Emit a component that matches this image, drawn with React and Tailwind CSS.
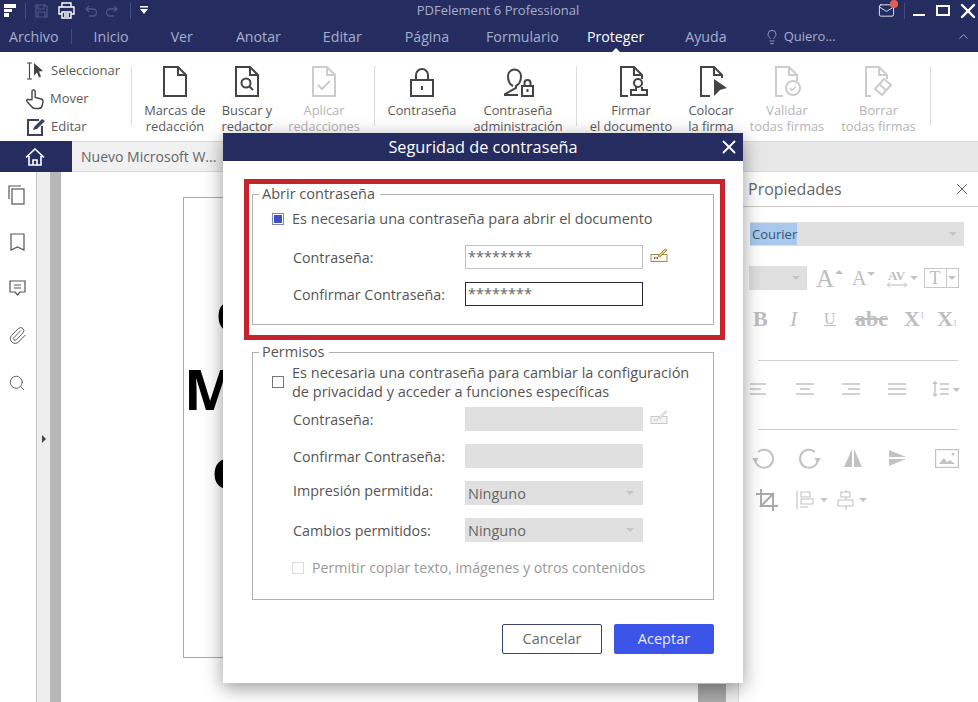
import { X, ChevronUp, Lightbulb, Search, Paperclip, Mail } from "lucide-react";

const navy = "bg-[#252d60]";

const menus = [
  ["Inicio", "ml-[21px]"],
  ["Ver", "ml-[42px]"],
  ["Anotar", "ml-[43px]"],
  ["Editar", "ml-[42px]"],
  ["Página", "ml-[43px]"],
  ["Formulario", "ml-[37px]"],
];

function DocIcon({ color = "#444", children, w = 24 }) {
  return (
    <svg width={w} height="31" viewBox={`0 0 ${w} 31`} fill="none" stroke={color} strokeWidth="2">
      {children || <path d="M1 1h14l8 8v21H1z" />}
      <path d="M15 1v8h8" />
    </svg>
  );
}

function RibbonItem({ icon, lines, width, off }) {
  return (
    <div className={`${width} shrink-0 pt-[14px] flex flex-col items-center`}>
      <div className="h-[33px] flex items-start justify-center">{icon}</div>
      <div className={`mt-[3px] text-[12.8px] leading-4 text-center whitespace-nowrap ${off ? "text-[#b4b4b4]" : "text-[#5a5a5a]"}`}>
        {lines[0]}
        {lines[1] && <br />}
        {lines[1]}
      </div>
    </div>
  );
}

function Sep({ className = "" }) {
  return <div className={`w-px h-[60px] mt-[14px] shrink-0 bg-[#dcdcdc] ${className}`} />;
}

function KeyIcon({ faded }) {
  return (
    <svg width="18" height="16" viewBox="0 0 18 16" fill="none">
      <rect x="1" y="7.5" width="16" height="7" fill={faded ? "#f4f4f4" : "#fdf8e8"} stroke={faded ? "#c8c8c8" : "#a09060"} />
      <path d="M4 11h5" stroke={faded ? "#c0c0c0" : "#444"} strokeWidth="1.5" strokeDasharray="1.5 1" />
      <path d="M8 9l7-7 2 1-7 7z" fill={faded ? "#e6e6e6" : "#e8c860"} stroke={faded ? "#c8c8c8" : "#8a7038"} strokeWidth="0.7" />
    </svg>
  );
}

function Row({ label, children, extra, labelClass = "pt-[1px]" }) {
  return (
    <div className="flex items-center h-6 pl-[40px]">
      <div className={`w-[172px] shrink-0 text-[14.3px] ${labelClass}`}>{label}</div>
      {children}
      {extra}
    </div>
  );
}

function Caret({ className = "" }) {
  return <div className={`w-0 h-0 border-x-[4px] border-x-transparent border-t-[4px] border-t-[#c4c4c4] ${className}`} />;
}

function Greybox({ text }) {
  return (
    <div className="w-[178px] h-6 bg-[#e0e0e0] flex items-center justify-between pl-[3px] pr-[9px] text-[#666]">
      <span className="pt-[1px]">{text}</span>
      {text && <Caret />}
    </div>
  );
}

function Dialog() {
  return (
    <div className="absolute left-[223px] top-[133px] w-[520px] h-[550px] bg-white shadow-[0_5px_18px_rgba(0,0,0,0.4)] text-[14.5px] leading-5 text-[#555] flex flex-col">
      <div className={`${navy} h-7 shrink-0 flex items-center justify-center relative`}>
        <span className="text-white text-[16.3px]">Seguridad de contraseña</span>
        <X className="absolute right-[3px] top-[3px] text-white" size={22} strokeWidth={2} />
      </div>

      <div className="ml-[21px] mr-[18px] mt-[18px] h-[161px] border-[5px] border-[#c6242d] pl-[3px] pr-[6px]">
        <fieldset className="h-[141px] border border-[#b0b0b0]">
          <legend className="ml-[6px] pl-[3px] pr-[5px]">Abrir contraseña</legend>
          <div className="flex items-center h-5 mt-[5px] pl-[19px]">
            <div className="w-3 h-3 border border-[#7c86b8] bg-[#3f51c5] shadow-[inset_0_0_0_1px_#fff] shrink-0" />
            <span className="ml-2">Es necesaria una contraseña para abrir el documento</span>
          </div>
          <div className="mt-[16px] flex flex-col gap-[13px]">
            <Row label="Contraseña:" extra={<div className="ml-[7px] -mt-[5px]"><KeyIcon /></div>}>
              <div className="w-[178px] h-6 border border-[#c0c0c0] pl-[2px] pt-[1px] leading-5 text-[#666]">********</div>
            </Row>
            <Row label="Confirmar Contraseña:">
              <div className="w-[178px] h-6 border border-[#2a2a3a] pl-[2px] pt-[1px] leading-5 text-[#666]">********</div>
            </Row>
          </div>
        </fieldset>
      </div>

      <fieldset className="mx-[29px] mt-[2px] h-[258px] border border-[#b0b0b0]">
        <legend className="ml-[6px] pl-[3px] pr-[5px]">Permisos</legend>
        <div className="flex items-center mt-[1px] pl-[19px] leading-[19px]">
          <div className="w-3 h-3 border border-[#777] shrink-0" />
          <span className="ml-2">
            Es necesaria una contraseña para cambiar la configuración
            <br />
            de privacidad y acceder a funciones específicas
          </span>
        </div>
        <div className="mt-[6px] flex flex-col gap-[13px]">
          <Row label="Contraseña:" extra={<div className="ml-[7px] -mt-[5px]"><KeyIcon faded /></div>}>
            <Greybox />
          </Row>
          <Row label="Confirmar Contraseña:">
            <Greybox />
          </Row>
          <Row label="Impresión permitida:" labelClass="pb-[4px]">
            <Greybox text="Ninguno" />
          </Row>
          <Row label="Cambios permitidos:">
            <Greybox text="Ninguno" />
          </Row>
        </div>
        <div className="flex items-center h-5 mt-[16px] pl-[39px] text-[14.2px] text-[#999]">
          <div className="w-3 h-3 border border-[#ddd] shrink-0" />
          <span className="ml-2">Permitir copiar texto, imágenes y otros contenidos</span>
        </div>
      </fieldset>

      <div className="flex justify-end gap-3 mr-[29px] mt-[24px]">
        <div className="w-[100px] h-[30px] border border-[#3a4270] rounded-[2px] flex items-center justify-center text-[#6a6a6a]">Cancelar</div>
        <div className="w-[100px] h-[30px] bg-[#3c55e8] rounded-[2px] flex items-center justify-center text-[#e8ecff]">Aceptar</div>
      </div>
    </div>
  );
}

function PropertiesPanel() {
  const grey = "#c2c2c2";
  return (
    <div className="w-[240px] shrink-0 bg-white border-l border-[#d8d8d8]">
      <div className="h-[35px] pl-[9px] pr-[7px] border-b border-[#c8c8c8] flex items-center justify-between">
        <span className="text-[16px] text-[#666]">Propiedades</span>
        <X size={18} strokeWidth={1.1} className="text-[#444]" />
      </div>
      <div className="ml-[11px] mt-[15px] w-[214px] h-6 bg-[#e0e0e0] flex items-center justify-between pr-[7px] text-[13px]">
        <span className="pl-[2px] bg-[#a9c8ee] text-[#3a5578] leading-[22px]">Courier</span>
        <Caret />
      </div>

      <div className="ml-[10px] mt-[20px] h-6 flex items-center font-['Liberation_Serif',serif] text-[#bdbdbd]">
        <div className="w-[58px] h-6 bg-[#e0e0e0] flex items-center justify-end pr-[7px]"><Caret /></div>
        <span className="ml-[9px] text-[25px] leading-none">A</span>
        <div className="w-0 h-0 mb-3 ml-[1px] border-x-[4px] border-x-transparent border-b-[4px] border-b-[#bdbdbd]" />
        <span className="ml-[9px] text-[20px] leading-none">A</span>
        <Caret className="mb-2" />
        <div className="ml-[11px] w-[22px] flex flex-col items-center">
          <span className="text-[13px] font-bold leading-[13px]">AV</span>
          <svg width="20" height="6" viewBox="0 0 20 6" fill="none" stroke="#bdbdbd">
            <path d="M0 3h20M3 .5L.5 3 3 5.500M17 .5L19.500 3 17 5.500" />
          </svg>
        </div>
        <Caret className="ml-[2px]" />
        <div className="ml-[6px] w-[35px] h-[20px] border border-[#c8c8c8] flex text-[18px] leading-[18px]">
          <span className="w-[22px] border-r border-[#c8c8c8] text-center">T</span>
          <span className="flex-1 flex items-center justify-center"><Caret /></span>
        </div>
      </div>

      <div className="ml-[14px] mt-[17px] h-6 flex items-center font-['Liberation_Serif',serif] text-[#bdbdbd] text-[22px] leading-none">
        <span className="font-bold w-[37px]">B</span>
        <span className="italic w-[34px]">I</span>
        <span className="underline text-[16px] w-[31px]">U</span>
        <span className="line-through w-[49px] font-bold">abc</span>
        <span className="font-bold">X</span>
        <span className="text-[9px] -mt-2 w-[17px]">1</span>
        <span className="font-bold">X</span>
        <span className="text-[9px] mt-2">1</span>
      </div>

      <div className="ml-[19px] mt-[29px] w-[200px] h-px bg-[#cfcfcf]" />

      <div className="ml-[11px] mt-[20px] h-[16px] flex items-center">
        {[
          "M0 2h16M0 7h11M0 12h16",
          "M0 2h18M4 7h10M0 12h18",
          "M0 2h18M6 7h12M0 12h18",
          "M0 2h18M0 7h18M0 12h18",
        ].map((d, i) => (
          <svg key={d} width="18" height="14" viewBox="0 0 18 14" className={i === 0 ? "" : "ml-[28px]"} stroke={grey} strokeWidth="1.6">
            <path d={d} />
          </svg>
        ))}
        <svg width="28" height="16" viewBox="0 0 28 16" className="ml-[26px]" stroke={grey} strokeWidth="1.4" fill="none">
          <path d="M3 1v14M1 3l2-2 2 2M1 13l2 2 2-2M8 3h9M8 8h9M8 13h9" />
          <path d="M21 7h7l-3.5 4z" fill={grey} stroke="none" />
        </svg>
      </div>

      <div className="ml-[19px] mt-[32px] w-[200px] h-px bg-[#cfcfcf]" />

      <div className="ml-[13px] mt-[16px] h-6 flex items-center">
        <svg width="24" height="24" viewBox="0 0 24 24" fill="none" stroke={grey} strokeWidth="2">
          <path d="M6 6a9 9 0 1 1-3 7" />
          <path d="M0 12h6.500l-3 5z" fill={grey} stroke="none" />
        </svg>
        <svg width="24" height="24" viewBox="0 0 24 24" fill="none" stroke={grey} strokeWidth="2" className="ml-[21px]">
          <path d="M18 6a9 9 0 1 0 3 7" />
          <path d="M24 12h-6.500l3 5z" fill={grey} stroke="none" />
        </svg>
        <svg width="18" height="18" viewBox="0 0 18 18" fill={grey} className="ml-[23px]">
          <path d="M8 0v18H0zM10 0l8 18h-8z" />
        </svg>
        <svg width="17" height="16" viewBox="0 0 17 16" fill={grey} className="ml-[27px]">
          <path d="M0 0l17 7H0zM0 9h17L0 16z" />
        </svg>
        <svg width="24" height="19" viewBox="0 0 24 19" fill="none" stroke={grey} strokeWidth="1.2" className="ml-[29px]">
          <rect x="0.6" y="0.6" width="22.8" height="17.8" />
          <path d="M4 15l5-6 3 4 3-2 5 4z" fill={grey} stroke="none" />
          <circle cx="18" cy="5" r="1.5" fill={grey} stroke="none" />
        </svg>
      </div>

      <div className="ml-[17px] mt-[18px] h-6 flex items-center">
        <svg width="22" height="22" viewBox="0 0 22 22" fill="none" stroke="#aaa" strokeWidth="2">
          <path d="M5 0v17h17M0 5h17v17M4 18L18 4" />
        </svg>
        <svg width="20" height="20" viewBox="0 0 20 20" fill="none" stroke={grey} strokeWidth="1.1" className="ml-[18px]">
          <path d="M1 1v18M5 2h9v5H5zM5 9h12v5H5zM4 17h8" />
        </svg>
        <Caret className="ml-[4px]" />
        <svg width="18" height="20" viewBox="0 0 18 20" fill="none" stroke={grey} strokeWidth="1.1" className="ml-[9px]">
          <path d="M4 2h9v5H4zM1 10h15v6H1zM9 0v2M9 7v3M9 16v4" />
        </svg>
        <Caret className="ml-[4px]" />
      </div>
    </div>
  );
}

export default function App() {
  return (
    <div className="relative w-[978px] h-[702px] overflow-hidden bg-white font-['Open_Sans',sans-serif]">
      <div className={`${navy} h-[26px] pb-[5px] flex items-center relative`}>
        <svg width="12" height="13" viewBox="0 0 12 13" fill="#fff" className="ml-[4px]">
          <path d="M0 0h12v4H0zM0 5h8v3H0zM0 9h5v4H0z" />
        </svg>
        <div className="ml-[9px] w-px h-4 bg-[#454e80]" />
        <svg width="13" height="14" viewBox="0 0 13 14" fill="none" stroke="#4d5688" strokeWidth="1.2" className="ml-[9px]">
          <path d="M1 1h9l2 2v10H1zM3 1v4h6V1M3 13V8h7v5" />
        </svg>
        <svg width="17" height="17" viewBox="0 0 17 17" fill="none" stroke="#fff" strokeWidth="1.4" className="ml-[10px]">
          <path d="M4 5V1h9v4M4 12H1V5h15v7h-3M4 10h9v6H4zM6 12h5M6 14h5" />
        </svg>
        <svg width="12" height="12" viewBox="0 0 12 12" fill="none" stroke="#4d5688" strokeWidth="1.3" className="ml-[10px]">
          <path d="M4 1L1 4l3 3M1 4h7a3 3 0 0 1 0 7H4" />
        </svg>
        <svg width="12" height="12" viewBox="0 0 12 12" fill="none" stroke="#4d5688" strokeWidth="1.3" className="ml-[9px]">
          <path d="M8 1l3 3-3 3M11 4H4a3 3 0 0 0 0 7h4" />
        </svg>
        <div className="ml-[12px] w-px h-4 bg-[#454e80]" />
        <svg width="8" height="9" viewBox="0 0 8 9" fill="#fff" className="ml-[9px]">
          <path d="M0 0h8v1.5H0zM0 3h8L4 8z" />
        </svg>
        <span className="absolute left-0 right-[-18px] text-center text-[13px] text-[#a7adcd]">PDFelement 6 Professional</span>
        <div className="ml-auto flex items-center text-white">
          <div className="relative">
            <Mail size={17} strokeWidth={1.2} />
            <div className="absolute -right-[3px] -top-[2px] w-2 h-2 rounded-full bg-[#e4604e]" />
          </div>
          <div className="ml-[9px] w-px h-4 bg-[#454e80]" />
          <div className="ml-2 w-[12px] h-[2px] bg-white mt-[9px]" />
          <div className="ml-[11px] w-[14px] h-[11px] border-2 border-white" />
          <X size={24} strokeWidth={2.4} className="ml-[6px] -mr-[2px] -my-[4px]" />
        </div>
      </div>

      <div className={`${navy} h-[26px] pb-[5px] flex items-center text-[14.2px] text-[#a7adcd] pl-[9px]`}>
        <span>Archivo</span>
        <div className="ml-[13px] w-px h-[15px] bg-[#454e80]" />
        {menus.map(([m, c]) => (
          <span key={m} className={c}>{m}</span>
        ))}
        <span className="ml-[28px] relative text-white">
          Proteger
          <span className="absolute left-[24px] -bottom-[6px] w-0 h-0 border-x-[5px] border-x-transparent border-b-[5px] border-b-white" />
        </span>
        <span className="ml-[41px]">Ayuda</span>
        <Lightbulb size={16} strokeWidth={1.3} className="ml-[37px]" />
        <span className="ml-[4px] text-[13px]">Quiero...</span>
        <ChevronUp size={15} strokeWidth={1.5} className="ml-auto mr-[7px]" />
      </div>

      <div className="h-[89px] flex items-start">
        <div className="w-[131px] shrink-0 pl-[26px] pt-[5px] text-[13px] text-[#5a5a5a]">
          <div className="h-7 flex items-center">
            <svg width="20" height="18" viewBox="0 0 20 18" fill="none" stroke="#444" strokeWidth="1.1" className="mr-[5px]">
              <path d="M1 1h5M1 17h5M3.5 1v16" />
              <path d="M8 1l9 8-4 .5 2 5-2 1-2-5-3 3z" fill="#444" stroke="none" />
            </svg>
            Seleccionar
          </div>
          <div className="h-7 flex items-center">
            <svg width="20" height="24" viewBox="0 0 20 21" fill="none" stroke="#444" strokeWidth="1.4" className="mr-[5px] -ml-[1px] -my-[2px]">
              <path d="M7 11V3a1.6 1.6 0 0 1 3.200 0v6l6 1.500c1.500.5 2 1.500 1.800 3l-.8 3.500c-.5 2-1.500 3-3.500 3H10c-1.500 0-2.500-.7-3.500-2L2 13c-1-1.500.7-3 2.200-1.800z" />
            </svg>
            Mover
          </div>
          <div className="h-7 flex items-center">
            <svg width="20" height="18" viewBox="0 0 20 18" fill="none" stroke="#3a4260" strokeWidth="2" className="mr-[5px]">
              <path d="M13 2H2v15h14V8" />
              <path d="M7 12l1-3 8-8 3 2-8 8z" fill="#3a4260" stroke="none" />
            </svg>
            Editar
          </div>
        </div>
        <Sep />
        <RibbonItem width="w-[86px]" lines={["Marcas de", "redacción"]} icon={<DocIcon />} />
        <RibbonItem
          width="w-[58px]"
          lines={["Buscar y", "redactor"]}
          icon={
            <DocIcon>
              <path d="M1 1h14l8 8v21H1z" />
              <circle cx="11" cy="17" r="4.500" />
              <path d="M14 20l4 4" />
            </DocIcon>
          }
        />
        <RibbonItem
          width="w-[96px]"
          off
          lines={["Aplicar", "redacciones"]}
          icon={
            <DocIcon color="#cccccc">
              <path d="M1 1h14l8 8v21H1z" />
              <path d="M6 19l4 4 8-8" />
            </DocIcon>
          }
        />
        <Sep className="ml-[2px]" />
        <RibbonItem
          width="w-[94px]"
          lines={["Contraseña"]}
          icon={
            <svg width="24" height="29" viewBox="0 0 24 29" fill="none" stroke="#444" strokeWidth="2" className="mt-[2px]">
              <rect x="1" y="12" width="22" height="16" />
              <path d="M6 12V7a6 6 0 0 1 12 0v5" />
              <path d="M12 18v4" />
            </svg>
          }
        />
        <RibbonItem
          width="w-[98px]"
          lines={["Contraseña", "administración"]}
          icon={
            <svg width="31" height="30" viewBox="0 0 31 30" fill="none" stroke="#444" strokeWidth="2" className="mt-[1px]">
              <path d="M10 19c-4-2-5-6-5-10a6.500 6.500 0 0 1 13 0c0 4-1 8-5 10v2l-11 6v1h13" />
              <rect x="19" y="19" width="11" height="10" />
              <path d="M21.500 19v-3a3 3 0 0 1 6 0v3M24.500 22v3" />
            </svg>
          }
        />
        <Sep className="ml-[9px]" />
        <RibbonItem
          width="w-[108px]"
          lines={["Firmar", "el documento"]}
          icon={
            <svg width="28" height="31" viewBox="0 0 28 31" fill="none" stroke="#444" strokeWidth="2" className="ml-[6px]">
              <path d="M8 30H1V1h13l8 8v4M14 1v8h8" />
              <circle cx="18" cy="17" r="4" />
              <path d="M16 21v3h-5v5h16v-5h-5v-3" />
            </svg>
          }
        />
        <RibbonItem
          width="w-[52px]"
          lines={["Colocar", "la firma"]}
          icon={
            <svg width="28" height="31" viewBox="0 0 28 31" fill="none" stroke="#444" strokeWidth="2" className="ml-[5px]">
              <path d="M10 30H1V1h13l8 8v3M14 1v8h8" />
              <path d="M14 13l13 9-7 2-6 6z" fill="#444" stroke="none" />
            </svg>
          }
        />
        <RibbonItem
          width="w-[100px]"
          off
          lines={["Validar", "todas firmas"]}
          icon={
            <svg width="27" height="31" viewBox="0 0 27 31" fill="none" stroke="#cccccc" strokeWidth="2" className="ml-[3px]">
              <path d="M8 30H1V1h13l8 8v6M14 1v8h8" />
              <circle cx="18" cy="22" r="7" />
              <path d="M15 22l2 2.500 4-4" strokeWidth="1.500" />
            </svg>
          }
        />
        <RibbonItem
          width="w-[83px]"
          off
          lines={["Borrar", "todas firmas"]}
          icon={
            <svg width="27" height="31" viewBox="0 0 27 31" fill="none" stroke="#cccccc" strokeWidth="2">
              <path d="M6 30H1V1h13l8 8v4M14 1v8h8" />
              <path d="M19 13l7 6-9 10-7-6z" />
              <path d="M14 18l7 6" />
            </svg>
          }
        />
        <Sep className="ml-[10px]" />
      </div>

      <div className="h-[31px] bg-[#e8e8e8] border-y border-[#dadada] flex">
        <div className={`${navy} w-[72px] -my-px flex items-center justify-center`}>
          <svg width="20" height="18" viewBox="0 0 20 18" fill="none" stroke="#fff" strokeWidth="1.6" className="-ml-[3px]">
            <path d="M1 9.500L10 1l9 8.500M4 8v9h12V8" />
            <path d="M8 17v-5h4v5" />
          </svg>
        </div>
        <div className="w-[160px] bg-[#f1f1f1] pl-[9px] flex items-center text-[14px] text-[#666] whitespace-nowrap overflow-hidden">
          Nuevo Microsoft W...
        </div>
      </div>

      <div className="h-[530px] flex">
        <div className="w-[37px] shrink-0 border-r border-[#c4c4c4] flex flex-col items-center pt-[13px] text-[#555]">
          <svg width="18" height="20" viewBox="0 0 18 20" fill="none" stroke="#555" strokeWidth="1.2" className="-ml-[2px]">
            <path d="M1 14V1h12" />
            <rect x="4" y="4" width="12" height="15" />
          </svg>
          <svg width="15" height="18" viewBox="0 0 15 18" fill="none" stroke="#555" strokeWidth="1.2" className="mt-[28px] -ml-[2px]">
            <path d="M1 1h13v16l-6.500-3L1 17z" />
          </svg>
          <svg width="17" height="16" viewBox="0 0 17 16" fill="none" stroke="#555" strokeWidth="1.2" className="mt-[29px] -ml-[2px]">
            <path d="M1 1h15v11h-5l-2.500 3L6 12H1zM5 5h7M5 8h7" />
          </svg>
          <Paperclip size={19} strokeWidth={1.2} className="mt-[30px] -ml-[2px]" />
          <Search size={18} strokeWidth={1.2} className="mt-[29px] -ml-[2px]" />
        </div>
        <div className="w-[13px] shrink-0 bg-[#eeeeee] flex items-center justify-center pt-[4px]">
          <div className="w-0 h-0 border-y-[4px] border-y-transparent border-l-[4px] border-l-[#444]" />
        </div>
        <div className="w-[11px] shrink-0 bg-[#b7b7b7]" />
        <div className="flex-1 min-w-0 pl-[122px] pt-[25px] overflow-hidden">
          <div className="w-[500px] h-[461px] border border-[#aaaaaa] text-[56px] leading-[79px] font-bold text-black">
            <div className="pl-[32px] mt-[72px]">c</div>
            <div>M</div>
            <div className="pl-[28px]">e</div>
          </div>
        </div>
        <div className="w-[28px] shrink-0 flex flex-col">
          <div className="flex-1 bg-white" />
          <div className="h-[18px] bg-[#ababab]" />
        </div>
        <div className="w-[12px] shrink-0 bg-[#eeeeee]" />
        <PropertiesPanel />
      </div>

      <Dialog />
    </div>
  );
}
